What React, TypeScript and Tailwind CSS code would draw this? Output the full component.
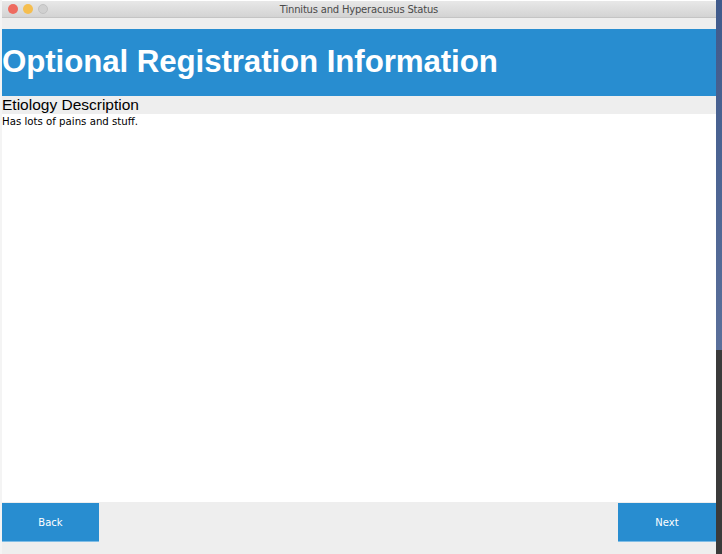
export default function App() {
  return (
    <div className="w-[722px] h-[554px] flex bg-[#f4f4f4] overflow-hidden font-['Liberation_Sans',Arial,sans-serif]">
      <div className="w-[2px]" />
      <div className="flex-1 flex flex-col bg-white">
        {/* title bar */}
        <div className="h-[17px] mt-[1px] flex items-center relative bg-gradient-to-b from-[#e8e8e8] to-[#d3d3d3] border-b border-[#c4c4c4]">
          <div className="flex gap-[5px] pl-[6px]">
            <span className="w-[10px] h-[10px] rounded-full bg-[#ee6a5f]" />
            <span className="w-[10px] h-[10px] rounded-full bg-[#f5be4f]" />
            <span className="w-[10px] h-[10px] rounded-full bg-[#d0d0d0] border border-[#c2c2c2]" />
          </div>
          <div className="absolute inset-0 flex items-center justify-center text-[10px] text-[#4a4a4a] font-['DejaVu_Sans',sans-serif] tracking-[-0.2px]">
            Tinnitus and Hyperacusus Status
          </div>
        </div>
        <div className="h-[11px] bg-[#eeeeee]" />
        <div className="h-[67px] bg-[#288dd0] flex items-center">
          <h1 className="text-white font-bold text-[31.3px] leading-none tracking-[-0.1px] pb-[1px]">
            Optional Registration Information
          </h1>
        </div>
        <div className="h-[18px] bg-[#eeeeee] flex items-center">
          <span className="text-[15.5px] leading-none text-black">Etiology Description</span>
        </div>
        <div className="flex-1 pt-[2px]">
          <p className="text-[10.2px] leading-[12px] text-black font-['DejaVu_Sans',sans-serif]">
            Has lots of pains and stuff.
          </p>
        </div>
        <div className="h-[52px] bg-[#eeeeee] flex justify-between items-start pt-[1px]">
          <button className="w-[97px] h-[39px] bg-[#288dd0] border-b border-[#7fbde6] text-white text-[10px] font-['DejaVu_Sans',sans-serif]">
            Back
          </button>
          <button className="w-[98px] h-[39px] bg-[#288dd0] border-b border-[#7fbde6] text-white text-[10px] font-['DejaVu_Sans',sans-serif]">
            Next
          </button>
        </div>
      </div>
      <div className="w-[6px] flex flex-col">
        <div className="h-[350px] bg-gradient-to-b from-[#3f5a8c] to-[#5a6f9a]" />
        <div className="flex-1 bg-[#3a3a3a]" />
      </div>
    </div>
  );
}
